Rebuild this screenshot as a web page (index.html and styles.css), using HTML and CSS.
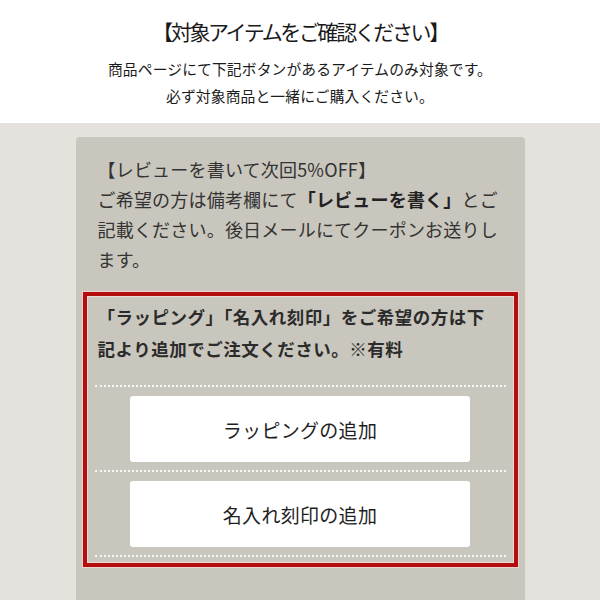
FILE: index.html
```html
<!DOCTYPE html>
<html lang="ja">
<head>
  <meta charset="UTF-8">
  <meta name="viewport" content="width=device-width, initial-scale=1.0">
  <title>対象アイテム</title>
  <link rel="stylesheet" href="styles.css">
</head>
<body>
  <header class="notice">
    <h1>【対象アイテムをご確認ください】</h1>
    <p>商品ページにて下記ボタンがあるアイテムのみ対象です。</p>
    <p>必ず対象商品と一緒にご購入ください。</p>
  </header>

  <main class="page">
    <div class="panel">
      <p class="review">【レビューを書いて次回5%OFF】<br>ご希望の方は備考欄にて<strong>「レビューを書く」</strong>とご記載ください。後日メールにてクーポンお送りします。</p>

      <div class="options">
        <p class="options-lead">「ラッピング」「名入れ刻印」をご希望の方は下記より追加でご注文ください。※有料</p>
        <ul class="option-list">
          <li><button class="option-btn">ラッピングの追加</button></li>
          <li><button class="option-btn">名入れ刻印の追加</button></li>
        </ul>
      </div>
    </div>
  </main>
</body>
</html>
```

FILE: styles.css
```css
:root {
  --bg: #e5e2dd;
  --panel: #c9c6bd;
  --red: #b40d0d;
  --text: #333333;
  --dark: #1a1a1a;
  --white: #ffffff;
}

* {
  margin: 0;
  padding: 0;
  box-sizing: border-box;
}

body {
  font-family: "Noto Sans CJK JP", "Noto Sans", sans-serif;
  background: var(--bg);
  height: 600px;
  overflow: hidden;
  display: flex;
  flex-direction: column;
}

.notice {
  background: var(--white);
  height: 123px;
  text-align: center;
  color: var(--dark);
  padding-top: 15px;
}

.notice h1 {
  font-size: 21px;
  font-weight: 400;
  line-height: 32px;
  letter-spacing: -2.4px;
  margin-bottom: 8px;
}

.notice p {
  font-size: 14.8px;
  line-height: 27px;
  letter-spacing: 0.1px;
}

.page {
  flex: 1;
  padding-top: 14px;
}

.panel {
  width: 449px;
  height: 100%;
  margin: 0 auto;
  background: var(--panel);
  border-radius: 4px 4px 0 0;
  padding: 17px 7px 0;
  color: var(--text);
}

.review {
  font-size: 18px;
  line-height: 30px;
  letter-spacing: 0.2px;
  padding: 0 15px;
  margin-bottom: 18px;
}

.review strong {
  color: #222;
}

.options {
  border: 4px solid var(--red);
  box-shadow: 0 0 0 1px rgba(255, 215, 215, 0.7), inset 0 0 0 1px rgba(255, 225, 225, 0.7);
  padding: 5px 8px 6px;
}

.options-lead {
  font-size: 17.5px;
  font-weight: 700;
  line-height: 32px;
  letter-spacing: 0.5px;
  padding: 0 3px;
  margin-bottom: 20px;
  color: #2b2b2b;
}

.option-list {
  list-style: none;
  border-bottom: 2px dotted rgba(255, 255, 255, 0.85);
}

.option-list li {
  border-top: 2px dotted rgba(255, 255, 255, 0.85);
  padding: 9px 0 8px;
  display: flex;
  justify-content: center;
}

.option-btn {
  width: 340px;
  height: 66px;
  background: var(--white);
  border: none;
  border-radius: 3px;
  font-family: inherit;
  font-size: 19px;
  color: #1e1e1e;
  letter-spacing: 0.3px;
  cursor: pointer;
}
```
